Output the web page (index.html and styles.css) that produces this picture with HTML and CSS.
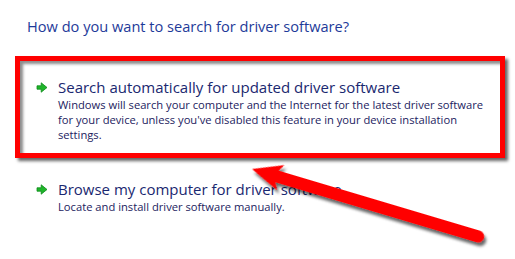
FILE: index.html
```html
<!DOCTYPE html>
<html>
<head>
<meta charset="utf-8">
<link rel="stylesheet" href="styles.css">
</head>
<body>
<div class="page">
  <h1 class="title">How do you want to search for driver software?</h1>
  <div class="option highlighted">
    <svg class="go" width="12" height="11" viewBox="0 0 12 11"><path d="M1 3.8 H5.2 V0.8 L11 5.5 L5.2 10.2 V7.2 H1 Z" fill="#1fb52a" stroke="#0d8a1a" stroke-width="0.8" stroke-linejoin="round"/></svg>
    <div class="text">
      <div class="head">Search automatically for updated driver software</div>
      <div class="desc">Windows will search your computer and the Internet for the latest driver software for your device, unless you've disabled this feature in your device installation settings.</div>
    </div>
  </div>
  <div class="option plain">
    <svg class="go" width="12" height="11" viewBox="0 0 12 11"><path d="M1 3.8 H5.2 V0.8 L11 5.5 L5.2 10.2 V7.2 H1 Z" fill="#1fb52a" stroke="#0d8a1a" stroke-width="0.8" stroke-linejoin="round"/></svg>
    <div class="text">
      <div class="head">Browse my computer for driver software</div>
      <div class="desc">Locate and install driver software manually.</div>
    </div>
  </div>
</div>
<svg class="annot" width="515" height="259" viewBox="0 0 515 259">
  <defs>
    <filter id="sh" x="-20%" y="-50%" width="140%" height="200%">
      <feDropShadow dx="3" dy="3" stdDeviation="1.6" flood-color="#000" flood-opacity="0.6"/>
    </filter>
  </defs>
  <g transform="translate(252 169) rotate(16.6)" filter="url(#sh)">
    <path d="M0 0 L30 -13 L26 -6 L236 -6 A6 6 0 0 1 236 6 L26 6 L30 13 Z" fill="#ff0000"/>
  </g>
</svg>
</body>
</html>
```
FILE: styles.css
```css
html, body {
  margin: 0;
  padding: 0;
  background: #ffffff;
}
body {
  position: relative;
  width: 515px;
  height: 259px;
  overflow: hidden;
  font-family: "Open Sans", "Noto Sans", sans-serif;
}
.page {
  display: flex;
  flex-direction: column;
}
.title {
  margin: 0;
  padding: 16px 0 0 27px;
  font-size: 14.6px;
  font-weight: 400;
  line-height: 20px;
  color: #1e3a99;
  height: 42px;
  box-sizing: border-box;
}
.option {
  display: flex;
  align-items: flex-start;
}
.highlighted {
  margin-left: 15px;
  width: 490px;
  height: 102px;
  box-sizing: border-box;
  border: 5px solid #ff0000;
  padding: 16px 0 0 16px;
  box-shadow: 3px 3px 3px rgba(0,0,0,0.6), inset 3px 3px 3px rgba(0,0,0,0.45);
  margin-top: 14px;
}
.plain {
  padding: 21px 0 0 36px;
}
.go {
  flex: none;
  margin-top: 5px;
  margin-right: 10px;
}
.text {
  display: flex;
  flex-direction: column;
}
.head {
  font-size: 15px;
  line-height: 20px;
  color: #1a2870;
}
.desc {
  font-size: 11.2px;
  line-height: 15px;
  color: #1c2260;
  width: 430px;
}
.annot {
  position: absolute;
  left: 0;
  top: 0;
  pointer-events: none;
}
```
